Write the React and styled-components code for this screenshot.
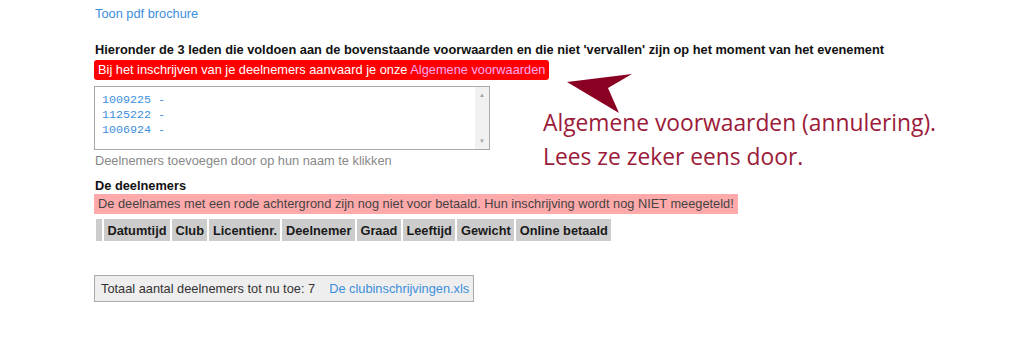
import React from 'react';
import styled, { createGlobalStyle } from 'styled-components';

const GlobalStyle = createGlobalStyle`
  body {
    margin: 0;
    background: #fff;
    font-family: 'Liberation Sans', Arial, sans-serif;
    font-size: 12.8px;
    color: #222;
  }
`;

const Page = styled.div`
  position: relative;
  width: 1024px;
  height: 361px;
  padding: 6px 0 0 95px;
  box-sizing: border-box;
`;

const Link = styled.a`
  color: #3d8fdc;
  text-decoration: none;
  cursor: pointer;
  line-height: 15px;
`;

const Heading = styled.div`
  font-weight: bold;
  line-height: 15px;
  margin-top: ${props => props.top || 0}px;
  color: #111;
`;

const Notice = styled.div`
  display: inline-block;
  margin-left: -1px;
  padding: 3px 4px;
  line-height: 14px;
  background: ${props => (props.soft ? '#ffaaaa' : '#ff0000')};
  color: ${props => (props.soft ? '#444' : '#fff')};
  border-radius: ${props => (props.soft ? 0 : 3)}px;
`;

const PinkLink = styled.a`
  color: #f7a6ee;
  text-decoration: none;
`;

const Block = styled.div`
  margin-top: ${props => props.top || 0}px;
  line-height: 0;
`;

const MemberBox = styled.div`
  display: flex;
  width: 396px;
  height: 64px;
  margin-left: -1px;
  border: 1px solid #a9a9a9;
  box-sizing: border-box;
  background: #fff;
`;

const MemberList = styled.div`
  flex: 1;
  padding: 6px 0 0 7px;
  font-family: 'Liberation Mono', 'DejaVu Sans Mono', monospace;
  font-size: 11.7px;
  line-height: 15px;
  color: #3d8fdc;
`;

const ScrollTrack = styled.div`
  width: 14px;
  background: #f1f1f1;
  display: flex;
  flex-direction: column;
  justify-content: space-between;
  align-items: center;
  padding: 4px 0;
  font-size: 6px;
  color: #a3a3a3;
  line-height: 8px;
`;

const Hint = styled.div`
  color: #888;
  line-height: 15px;
  margin-top: 3px;
`;

const HeaderTable = styled.table`
  margin: 3px 0 0 -1px;
  border-collapse: separate;
  border-spacing: 2px;
  font-size: 12.8px;
`;

const HeaderCell = styled.th`
  background: #cccccc;
  height: 22px;
  width: ${props => (props.empty ? '6px' : 'auto')};
  padding: 0 ${props => (props.empty ? 0 : 3.5)}px;
  box-sizing: border-box;
  font-weight: bold;
  color: #1a1a1a;
  white-space: nowrap;
`;

const TotalBox = styled.div`
  display: flex;
  gap: 14px;
  width: 380px;
  height: 27px;
  margin: 32px 0 0 -1px;
  padding: 0 6px;
  box-sizing: border-box;
  align-items: center;
  background: #eeeeee;
  border: 1px solid #aaa;
  color: #333;
  white-space: nowrap;
`;

const Callout = styled.div`
  position: absolute;
  left: 543px;
  top: 106px;
  font-family: 'Open Sans', 'Noto Sans', sans-serif;
  font-size: 22.8px;
  line-height: 34px;
  color: #9b1b3a;
`;

const Arrow = styled.svg`
  position: absolute;
  left: 560px;
  top: 68px;
`;

const columns = [
  'Datumtijd',
  'Club',
  'Licentienr.',
  'Deelnemer',
  'Graad',
  'Leeftijd',
  'Gewicht',
  'Online betaald',
];

const members = ['1009225 -', '1125222 -', '1006924 -'];

function App() {
  return (
    <Page>
      <GlobalStyle />
      <div>
        <Link>Toon pdf brochure</Link>
      </div>

      <Heading top={21}>
        Hieronder de 3 leden die voldoen aan de bovenstaande voorwaarden en die niet 'vervallen' zijn op het moment van het evenement
      </Heading>
      <Block top={3}>
        <Notice>
          Bij het inschrijven van je deelnemers aanvaard je onze <PinkLink>Algemene voorwaarden</PinkLink>
        </Notice>
      </Block>

      <Block top={6}>
        <MemberBox>
          <MemberList>
            {members.map(m => (
              <div key={m}>{m}</div>
            ))}
          </MemberList>
          <ScrollTrack>
            <span>▲</span>
            <span>▼</span>
          </ScrollTrack>
        </MemberBox>
      </Block>
      <Hint>Deelnemers toevoegen door op hun naam te klikken</Hint>

      <Heading top={10}>De deelnemers</Heading>
      <Block top={1}>
        <Notice soft>
          De deelnames met een rode achtergrond zijn nog niet voor betaald. Hun inschrijving wordt nog NIET meegeteld!
        </Notice>
      </Block>

      <HeaderTable>
        <thead>
          <tr>
            <HeaderCell empty />
            {columns.map(c => (
              <HeaderCell key={c}>{c}</HeaderCell>
            ))}
          </tr>
        </thead>
      </HeaderTable>

      <TotalBox>
        <span>Totaal aantal deelnemers tot nu toe: 7</span>
        <Link>De clubinschrijvingen.xls</Link>
      </TotalBox>

      <Arrow width="80" height="50" viewBox="0 0 80 50">
        <polygon points="7,14 72,6 48,20 59,45" fill="#8a0022" />
      </Arrow>
      <Callout>
        Algemene voorwaarden (annulering).
        <br />
        Lees ze zeker eens door.
      </Callout>
    </Page>
  );
}

export default App;
